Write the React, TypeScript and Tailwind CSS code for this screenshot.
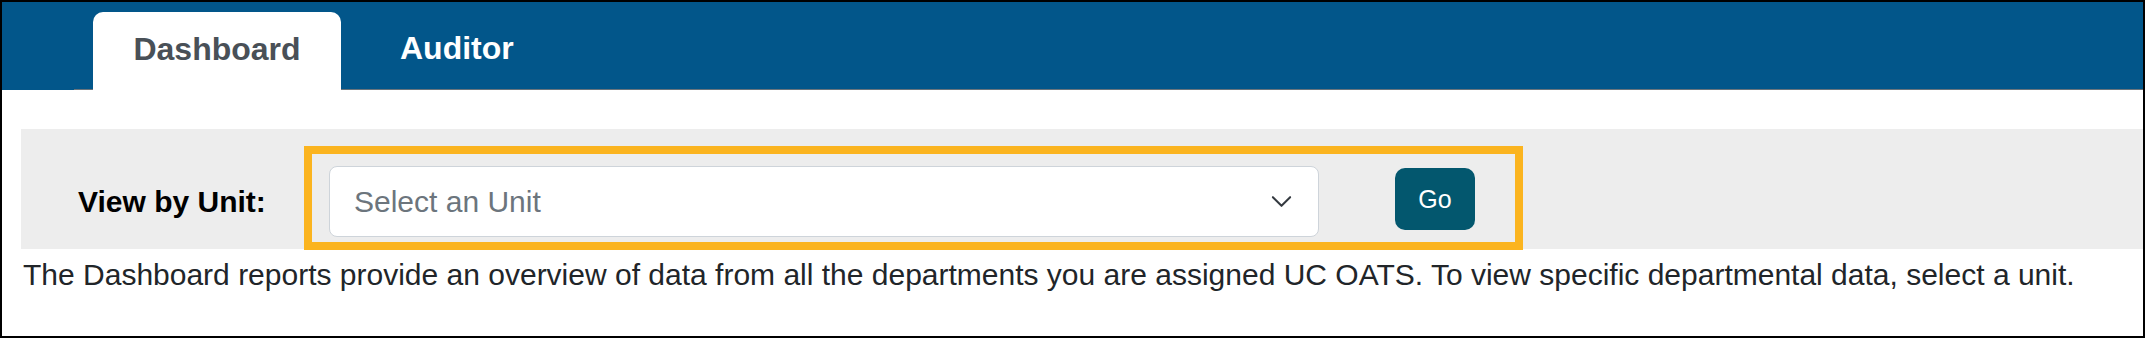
export default function App() {
  return (
    <div className="w-[2145px] h-[338px] border-2 border-black bg-white overflow-hidden font-['Liberation_Sans',Arial,sans-serif]">
      {/* Tabs header */}
      <div className="h-[88px] bg-[#02568a] flex items-end pl-[72px]">
        <ul className="flex flex-1 items-end border-b border-[#69747c]">
          <li className="ml-[19px] -mb-px h-[78px] w-[248px] rounded-t-[10px] bg-white pt-[19px] text-center text-[32px] leading-[36px] font-bold text-[#495057]">
            Dashboard
          </li>
          <li className="ml-[19px] h-[78px] px-[40px] pt-[19px] text-[32px] leading-[36px] font-bold text-white">
            Auditor
          </li>
        </ul>
      </div>

      {/* Unit filter */}
      <div className="pl-[19px] pt-[39px]">
        <div className="h-[120px] bg-[#ededed] flex items-start pl-[57px] pt-[17px]">
          <label className="mt-[38px] w-[226px] shrink-0 text-[30px] leading-[36px] font-bold text-black">
            View by Unit:
          </label>
          <div className="w-[1219px] h-[104px] shrink-0 border-[8px] border-[#fbb41f] flex items-start pl-[17px] pt-[12px]">
            <div className="w-[990px] h-[71px] rounded-[8px] border border-[#ced4da] bg-white flex items-center justify-between pl-[24px] pr-[25px]">
              <span className="text-[30px] leading-[36px] text-[#6c757d]">Select an Unit</span>
              <svg width="23" height="23" viewBox="0 0 16 16" fill="none" stroke="#343a40" strokeWidth="1.4" strokeLinecap="round" strokeLinejoin="round">
                <path d="M2 5l6 6 6-6" />
              </svg>
            </div>
            <button className="ml-[76px] mt-[2px] w-[80px] h-[62px] rounded-[10px] bg-[#03576e] text-white text-[25px] leading-none">
              Go
            </button>
          </div>
        </div>
        <p className="mt-[8px] pl-[2px] text-[30px] leading-[36px] text-[#212529] whitespace-nowrap">
          The Dashboard reports provide an overview of data from all the departments you are assigned UC OATS. To view specific departmental data, select a unit.
        </p>
      </div>
    </div>
  );
}
